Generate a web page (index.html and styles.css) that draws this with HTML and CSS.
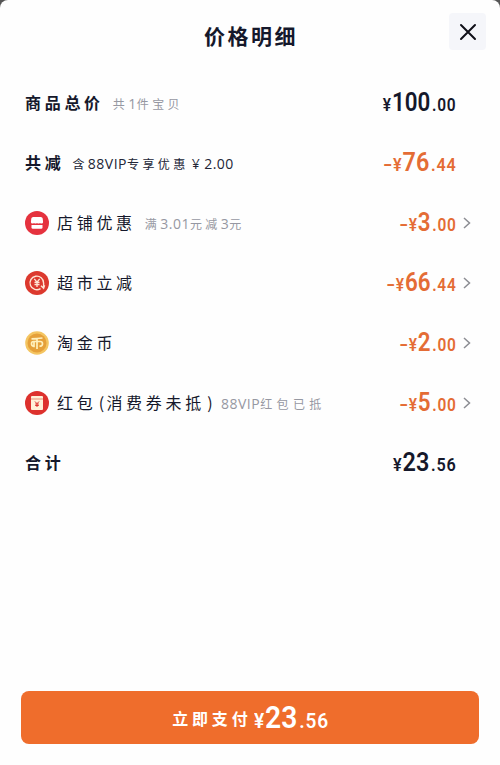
FILE: index.html
```html
<!DOCTYPE html>
<html lang="zh-CN">
<head>
  <meta charset="UTF-8">
  <meta name="viewport" content="width=device-width, initial-scale=1.0">
  <title>价格明细</title>
  <link rel="stylesheet" href="styles.css">
</head>
<body>
  <div class="sheet">
    <header class="header">
      <h1>价格明细</h1>
      <button class="close" aria-label="关闭">
        <svg width="18" height="18" viewBox="0 0 18 18"><path d="M2 2L16 16M16 2L2 16"/></svg>
      </button>
    </header>

    <ul class="list">
      <li class="row">
        <span class="label bold">商品总价</span>
        <span class="note note-total">共<span class="latin">1</span>件宝贝</span>
        <span class="price"><small>¥</small>100<small class="cents">.00</small></span>
      </li>
      <li class="row">
        <span class="label bold">共减</span>
        <span class="note dark">含<span class="latin">88VIP</span>专享优惠<span class="latin yen">¥</span><span class="latin">2.00</span></span>
        <span class="price orange wide"><small><span class="minus">-</span>¥</small>76<small class="cents">.44</small></span>
      </li>
      <li class="row">
        <svg class="icon" viewBox="0 0 24 24">
          <circle cx="12" cy="12" r="12" fill="#e5323e"/>
          <path d="M8.200 6h7.600q1.700 0 1.900 1.500l.4 3.500q0 1.500-1.600 1.500-1 0-1.500-.6-.7.6-1.500.6t-1.500-.6q-.7.6-1.500.6t-1.500-.6q-.6.6-1.500.6-1.600 0-1.600-1.500l.4-3.500Q6.500 6 8.200 6z" fill="#fff"/>
          <path d="M6.500 14h11v2.400q0 1.300-1.300 1.300H7.800q-1.300 0-1.300-1.300z" fill="#fff"/>
        </svg>
        <span class="label">店铺优惠</span>
        <span class="note note-shop">满<span class="latin">3.01</span>元减<span class="latin">3</span>元</span>
        <span class="price orange"><small><span class="minus">-</span>¥</small>3<small class="cents">.00</small></span>
        <svg class="arrow" viewBox="0 0 8 12"><path d="M1 1l5.500 5L1 11"/></svg>
      </li>
      <li class="row">
        <svg class="icon" viewBox="0 0 24 24">
          <circle cx="12" cy="12" r="12" fill="#dc392e"/>
          <path d="M15.500 17.600A6.800 6.800 0 1 1 18.600 12v4.600M16 14.800l2.600 2.500 1-3" fill="none" stroke="#ffe5d5" stroke-width="1.400"/>
          <path d="M9.300 7.800l2.700 3.400 2.700-3.400M12 11.200V16M9.500 11.500h5M9.500 13.600h5" fill="none" stroke="#ffe5d5" stroke-width="1.300"/>
        </svg>
        <span class="label">超市立减</span>
        <span class="price orange"><small><span class="minus">-</span>¥</small>66<small class="cents">.44</small></span>
        <svg class="arrow" viewBox="0 0 8 12"><path d="M1 1l5.500 5L1 11"/></svg>
      </li>
      <li class="row">
        <svg class="icon" viewBox="0 0 24 24">
          <circle cx="12" cy="12" r="11.800" fill="#f4c562"/>
          <circle cx="12" cy="12" r="9.500" fill="#e5a03a"/>
          <path d="M6.500 7.800q5.500-.1 11-.8M12 7.500V18M9.800 10.500H8.500q-2 0-2 2.300t2 2.400M9 10.500h6.200q2.300 0 2.300 2.300t-2.100 2.400h-.9M9 10.500v5.800" fill="none" stroke="#fff0bd" stroke-width="1.700"/>
        </svg>
        <span class="label">淘金币</span>
        <span class="price orange"><small><span class="minus">-</span>¥</small>2<small class="cents">.00</small></span>
        <svg class="arrow" viewBox="0 0 8 12"><path d="M1 1l5.500 5L1 11"/></svg>
      </li>
      <li class="row">
        <svg class="icon" viewBox="0 0 24 24">
          <circle cx="12" cy="12" r="12" fill="#dd312d"/>
          <rect x="6" y="5" width="12" height="14" rx="1" fill="#fff0d8"/>
          <path d="M6 8h12" stroke="#e88c74"/>
          <path d="M10 10.500l2 2.200 2-2.200M12 12.700V16M10.200 13h3.600M10.200 14.500h3.600" fill="none" stroke="#dd312d"/>
        </svg>
        <span class="label">红包<span class="paren">(</span>消费券未抵<span class="paren">)</span></span>
        <span class="note note-packet"><span class="latin">88VIP</span>红包已抵</span>
        <span class="price orange"><small><span class="minus">-</span>¥</small>5<small class="cents">.00</small></span>
        <svg class="arrow" viewBox="0 0 8 12"><path d="M1 1l5.500 5L1 11"/></svg>
      </li>
      <li class="row">
        <span class="label bold">合计</span>
        <span class="price wide"><small>¥</small>23<small class="cents">.56</small></span>
      </li>
    </ul>

    <button class="pay">
      <span>立即支付</span>
      <span class="pay-price"><small>¥</small>23<small class="cents">.56</small></span>
    </button>
  </div>
</body>
</html>
```
FILE: styles.css
```css
* {
  box-sizing: border-box;
}
body {
  margin: 0;
  background: #555;
  font-family: "Noto Sans CJK SC", sans-serif;
  color: #15182b;
}
.sheet {
  height: 765px;
  display: flex;
  flex-direction: column;
  background: #fefefe;
  border-radius: 8px 8px 0 0;
}
.header {
  height: 73px;
  flex: none;
  display: grid;
  grid-template-columns: 1fr auto 1fr;
  align-items: start;
  padding: 13px 14px 0;
}
h1 {
  grid-column: 2;
  margin: 6px 0 0 2px;
  font-size: 21px;
  line-height: 32px;
  letter-spacing: 2.500px;
}
.close {
  justify-self: end;
  width: 37px;
  height: 37px;
  display: grid;
  place-items: center;
  padding: 0;
  border: none;
  border-radius: 4px;
  background: #f5f6fa;
}
.close path {
  fill: none;
  stroke: #101018;
  stroke-width: 2;
  stroke-linecap: round;
}
.list {
  list-style: none;
  margin: 0;
  padding: 0 29px 0 25px;
}
.row {
  height: 60px;
  display: flex;
  align-items: center;
  white-space: nowrap;
}
.icon {
  width: 24px;
  height: 24px;
  margin-right: 8px;
}
.label {
  padding-bottom: 2px;
  font-size: 16px;
  letter-spacing: 3.700px;
}
.label.bold {
  font-weight: 700;
}
.paren {
  display: inline-block;
  width: 10px;
  letter-spacing: 0;
  text-align: center;
}
.note {
  margin-left: 9px;
  font-size: 12px;
  letter-spacing: 3.400px;
  color: #9698a2;
}
.note.dark {
  margin-left: 8px;
  color: #222536;
}
.note .latin {
  font-family: "Open Sans", sans-serif;
  font-size: 14px;
  letter-spacing: 0.500px;
}
.note .yen {
  margin: 0 4px 0 3px;
}
.note-packet {
  margin-left: 6px;
  letter-spacing: 4.400px;
}
.price {
  margin-left: auto;
  margin-right: 15px;
  font-family: Roboto, sans-serif;
  font-size: 26px;
  font-weight: 600;
  line-height: 30px;
  transform: scaleX(0.86);
  transform-origin: right;
}
.price.wide {
  transform: scaleX(0.9);
}
.price small {
  margin-right: 1px;
  font-size: 18px;
}
.price .cents {
  margin: 0 -1px 0 2px;
  letter-spacing: 0.900px;
}
.minus {
  display: inline-block;
  width: 11px;
  transform: scaleX(1.600);
  transform-origin: left;
}
.orange {
  color: #e46c35;
}
.arrow {
  width: 8px;
  height: 12px;
  margin-left: -8px;
}
.arrow path {
  fill: none;
  stroke: #8c8d93;
  stroke-width: 1.500;
}
.pay {
  height: 53px;
  flex: none;
  margin: auto 21px 21px;
  padding: 0 0 0 9px;
  display: flex;
  justify-content: center;
  align-items: center;
  border: none;
  border-radius: 8px;
  background: #ef6d2c;
  color: #fff;
  font-family: inherit;
  font-size: 16px;
  font-weight: 700;
  letter-spacing: 3.800px;
}
.pay-price {
  margin-left: 3px;
  font-family: Roboto, sans-serif;
  font-size: 31px;
  font-weight: 600;
  letter-spacing: 0;
  transform: scaleX(0.91);
  transform-origin: left;
}
.pay-price small {
  margin-right: 1px;
  font-size: 21px;
}
.pay-price .cents {
  margin: 0 0 0 2px;
  letter-spacing: 0.900px;
}
```
